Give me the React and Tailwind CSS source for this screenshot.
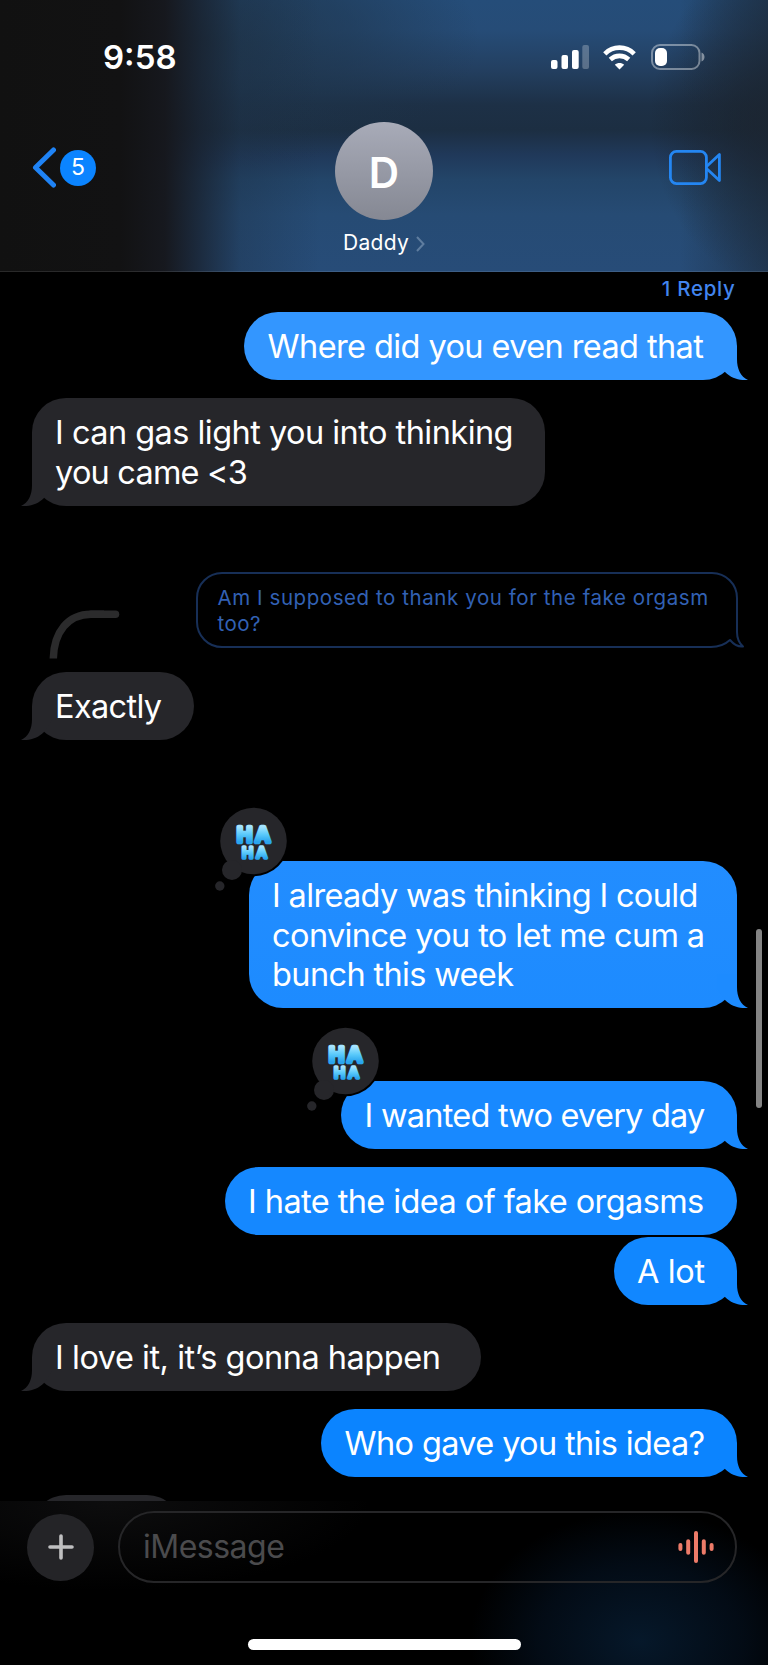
const messages = [
  {
    id: 1,
    side: 'right',
    tail: true,
    box: 'mt-[11px] h-[68px] w-[492.5px] bg-[#3396ff]',
    tailColor: 'text-[#3396ff]',
    lines: [{ text: 'Where did you even read that', tracking: 'tracking-[-0.6px]' }]
  },
  {
    id: 2,
    side: 'left',
    tail: true,
    box: 'mt-[18px] h-[107.5px] w-[513.5px] bg-[#26262a]',
    tailColor: 'text-[#26262a]',
    lines: [
      { text: 'I can gas light you into thinking', tracking: 'tracking-[-0.54px]' },
      { text: 'you came <3', tracking: 'tracking-[-0.8px]' }
    ]
  },
  { id: 3, quoted: true },
  {
    id: 4,
    side: 'left',
    tail: true,
    box: 'mt-[24px] h-[68px] w-[162.5px] bg-[#26262a]',
    tailColor: 'text-[#26262a]',
    lines: [{ text: 'Exactly', tracking: 'tracking-[-0.67px]' }]
  },
  {
    id: 5,
    side: 'right',
    tail: true,
    haha: true,
    box: 'mt-[121px] h-[146.5px] w-[488px] bg-gradient-to-b from-[#228dff] to-[#1d8bff]',
    tailColor: 'text-[#1d8bff]',
    lines: [
      { text: 'I already was thinking I could', tracking: 'tracking-[-0.67px]' },
      { text: 'convince you to let me cum a', tracking: 'tracking-[-0.63px]' },
      { text: 'bunch this week', tracking: 'tracking-[-0.65px]' }
    ]
  },
  {
    id: 6,
    side: 'right',
    tail: true,
    haha: true,
    box: 'mt-[73.5px] h-[68px] w-[395.5px] bg-[#1889ff]',
    tailColor: 'text-[#1889ff]',
    lines: [{ text: 'I wanted two every day', tracking: 'tracking-[-0.77px]' }]
  },
  {
    id: 7,
    side: 'right',
    box: 'mt-[18px] h-[68px] w-[512px] bg-[#1588ff]',
    lines: [{ text: 'I hate the idea of fake orgasms', tracking: 'tracking-[-0.59px]' }]
  },
  {
    id: 8,
    side: 'right',
    tail: true,
    box: 'mt-[2px] h-[68px] w-[123px] bg-[#1187ff]',
    tailColor: 'text-[#1187ff]',
    lines: [{ text: 'A lot', tracking: 'tracking-[-0.4px]' }]
  },
  {
    id: 9,
    side: 'left',
    tail: true,
    box: 'mt-[18px] h-[68px] w-[449.5px] bg-[#26262a]',
    tailColor: 'text-[#26262a]',
    lines: [{ text: 'I love it, it’s gonna happen', tracking: 'tracking-[-0.48px]' }]
  },
  {
    id: 10,
    side: 'right',
    tail: true,
    box: 'mt-[18px] h-[68px] w-[415.5px] bg-[#0b84ff]',
    tailColor: 'text-[#0b84ff]',
    lines: [{ text: 'Who gave you this idea?', tracking: 'tracking-[-0.64px]' }]
  }
];

const SignalIcon = () => (
  <svg className="w-[38px] h-[24px]" viewBox="0 0 38 24" fill="#fff">
    <rect x="0" y="15" width="6.5" height="9" rx="2" />
    <rect x="10.5" y="10" width="6.5" height="14" rx="2" />
    <rect x="21" y="5" width="6.7" height="19" rx="2" />
    <rect x="31.3" y="0" width="6.7" height="24" rx="2" opacity="0.25" />
  </svg>
);

const WifiIcon = () => (
  <svg className="w-[33px] h-[25px]" viewBox="0 0 33 25" fill="none" stroke="#fff" strokeWidth="4.6">
    <path d="M1.8 8.8C10 .6 23 .6 31.2 8.8" />
    <path d="M7.3 14.5c5.2-4.9 13.2-4.9 18.4 0" />
    <path d="M16.5 24.6l-4.7-4.9c2.6-2.4 6.8-2.4 9.4 0z" fill="#fff" stroke="none" />
  </svg>
);

const BatteryIcon = () => (
  <svg className="w-[54px] h-[26px]" viewBox="0 0 54 26" fill="none">
    <rect x="1" y="1" width="47.5" height="24" rx="8" stroke="#fff" strokeOpacity="0.4" strokeWidth="2" />
    <rect x="4" y="4" width="12" height="18" rx="5" fill="#fff" />
    <path d="M50.5 8.5c4 1.6 4 7.4 0 9z" fill="#fff" fillOpacity="0.45" />
  </svg>
);

const Tail = ({ side, color }) => (
  <svg
    className={`absolute bottom-0 w-[31px] h-[34px] ${color} ${side === 'right' ? '-right-[11px]' : '-left-[11px] -scale-x-100'}`}
    viewBox="0 0 31 34"
    fill="currentColor"
  >
    <path d="M0 0H20V13C20 23 23.5 30.5 31 34C22.5 34.6 14.5 32.5 8 26L0 14Z" />
  </svg>
);

const HahaReaction = () => (
  <svg className="absolute -left-[34px] -top-[56px] w-[76px] h-[86px]" viewBox="0 0 76 86">
    <defs>
      <linearGradient id="haha" x1="0" y1="0" x2="0" y2="1">
        <stop offset="0.2" stopColor="#a5e4ff" />
        <stop offset="0.5" stopColor="#5ccbfb" />
        <stop offset="0.8" stopColor="#2aa5ee" />
      </linearGradient>
    </defs>
    <circle cx="38.5" cy="36" r="35.3" fill="#000" />
    <circle cx="38.5" cy="36" r="33.3" fill="#26262a" />
    <circle cx="17" cy="65" r="10" fill="#26262a" />
    <circle cx="4.8" cy="81" r="4.7" fill="#26262a" />
    <g
      fill="url(#haha)"
      stroke="url(#haha)"
      strokeLinejoin="round"
      fontFamily="Inter, sans-serif"
      fontWeight="500"
      textAnchor="middle"
    >
      <text x="38.5" y="36.7" fontSize="20.5" strokeWidth="4.6" textLength="33" lengthAdjust="spacing">HA</text>
      <text x="39.5" y="53" fontSize="15" strokeWidth="3.4" textLength="25" lengthAdjust="spacing">HA</text>
    </g>
  </svg>
);

const Bubble = ({ message }) => (
  <div className={`flex ${message.side === 'right' ? 'justify-end' : 'justify-start'}`}>
    <div className={`relative shrink-0 rounded-[34px] pl-[23.6px] pt-[15.4px] ${message.box}`}>
      {message.tail && <Tail side={message.side} color={message.tailColor} />}
      {message.haha && <HahaReaction />}
      {message.lines.map((line) => (
        <p key={line.text} className="relative whitespace-nowrap text-[32.5px] leading-[39.3px]">
          <span className={line.tracking}>{line.text}</span>
        </p>
      ))}
    </div>
  </div>
);

const QuotedReply = () => (
  <div className="mt-[66.5px] flex justify-between items-end">
    <svg className="ml-[17px] -mb-[11px] w-[71px] h-[49px]" viewBox="0 0 71 49" fill="none" stroke="#2b2b2c" strokeWidth="7.5">
      <path d="M4.3 48.5C5 22 19 4.3 42 4.3H55" />
      <path d="M42 4.3H66.5" strokeLinecap="round" />
    </svg>
    <div className="relative h-[76px] w-[542px] rounded-[26px] border-2 border-[#172f57] pl-[20px] pt-[11px] -mr-[1px]">
      <p className="whitespace-nowrap text-[20.5px] leading-[25.5px] text-[#3261b4]">
        <span className="tracking-[0.57px]">Am I supposed to thank you for the fake orgasm</span>
        <br />
        <span className="tracking-[0.5px]">too?</span>
      </p>
      <svg className="absolute -right-[9px] -bottom-[2px] w-[34px] h-[28px]" viewBox="0 0 34 28" fill="none">
        <path d="M0 0H34V28H0Z" fill="#000" />
        <path
          d="M0 27C8 27 14 24.5 19 20C22 23.5 27 27 32 26.5C28 23 26 18 26 12V0"
          stroke="#172f57"
          strokeWidth="2"
          strokeLinejoin="round"
        />
      </svg>
    </div>
  </div>
);

const Header = () => (
  <header className="relative h-[272px] shrink-0 overflow-hidden bg-[linear-gradient(180deg,#254d79_0px,#264c77_30px,#233f60_70px,#1d3046_105px,#1c2e42_130px,#20395a_155px,#234569_180px,#264b74_215px,#274c78_272px)]">
    {/* Colour that shows through the frosted bar */}
    <div className="absolute inset-0 bg-[radial-gradient(ellipse_280px_130px_at_200px_40px,rgba(30,50,68,0.8),rgba(30,52,74,0.5)_55%,transparent)]" />
    <div className="absolute inset-0 bg-[radial-gradient(ellipse_140px_170px_at_790px_120px,rgba(26,28,33,1),rgba(26,32,40,0.5)_50%,transparent)]" />
    <div className="absolute inset-0 bg-[linear-gradient(90deg,#111111_0px,#121213_120px,rgba(22,23,28,0.97)_165px,rgba(24,32,44,0.75)_200px,rgba(28,46,66,0.35)_240px,transparent_320px,transparent_680px,rgba(28,42,58,0.6)_768px)]" />

    <div className="relative flex items-center justify-between pl-[103px] pr-[63px] pt-[37px]">
      <span className="text-[33px] font-semibold leading-[40px]">9:58</span>
      <div className="flex items-center">
        <SignalIcon />
        <div className="ml-[14px]"><WifiIcon /></div>
        <div className="ml-[15px]"><BatteryIcon /></div>
      </div>
    </div>

    <div className="relative mt-[45px] flex justify-between px-[32px]">
      <div className="flex flex-1 items-center self-start pt-[25px]">
        <svg className="w-[24px] h-[41px]" viewBox="0 0 24 41" fill="none" stroke="#1f83f5" strokeWidth="5" strokeLinecap="round" strokeLinejoin="round">
          <path d="M21.5 3L3.5 20.5L21.5 38" />
        </svg>
        <span className="ml-[4px] flex h-9 w-9 items-center justify-center rounded-full bg-[#0b84ff] text-[23px]">5</span>
      </div>
      <div className="flex flex-col items-center">
        <div className="flex h-[98px] w-[98px] items-center justify-center rounded-full bg-gradient-to-b from-[#a8abb8] to-[#858893] pt-[2px] text-[42px] font-semibold">
          D
        </div>
        <div className="mt-[10px] flex items-center gap-[7px]">
          <span className="text-[21px] leading-[25px] tracking-[0.3px]">Daddy</span>
          <svg className="mt-[3px] w-[9px] h-[16px]" viewBox="0 0 9 16" fill="none" stroke="#5f7d9f" strokeWidth="2">
            <path d="M1 1L7.5 8L1 15" />
          </svg>
        </div>
      </div>
      <div className="flex flex-1 justify-end pt-[28px]">
        <svg className="mr-[15px] w-[52px] h-[35px]" viewBox="0 0 52 35" fill="none" stroke="#2486f2" strokeWidth="2.8" strokeLinejoin="round">
          <rect x="1.4" y="1.4" width="36" height="32.2" rx="6" />
          <path d="M37.5 16.5L50.4 4.5V30.5L37.5 18.5" />
        </svg>
      </div>
    </div>
    <div className="absolute inset-x-0 bottom-0 h-px bg-white/10" />
  </header>
);

const InputBar = () => (
  <footer className="relative h-[164px] shrink-0 overflow-hidden bg-black bg-[radial-gradient(ellipse_170px_130px_at_640px_140px,#06182a,rgba(4,16,30,0.7)_60%,transparent),radial-gradient(ellipse_260px_90px_at_110px_0px,#0d0d0e,transparent)]">
    <div className="flex items-center pl-[27px] pr-[31.5px] pt-[10px]">
      <div className="flex h-[67px] w-[67px] items-center justify-center rounded-full bg-[#242427]">
        <svg className="w-[26px] h-[26px]" viewBox="0 0 26 26" stroke="#c0c0c1" strokeWidth="3.6" strokeLinecap="round">
          <path d="M13 2V24M2 13H24" />
        </svg>
      </div>
      <div className="ml-[24px] flex h-[72px] flex-1 items-center justify-between rounded-full border-2 border-[#262628] pl-[23px] pr-[21px]">
        <span className="text-[32px] leading-[40px] tracking-[-0.5px] text-[#4b4b4d]">iMessage</span>
        <svg className="w-[36px] h-[34px]" viewBox="0 0 36 34" stroke="#ed7b69" strokeWidth="4" strokeLinecap="round">
          <path d="M2.4 15V19M10.2 11.2V22.8M18 3V31M25.8 11.2V22.8M33.6 15V19" />
        </svg>
      </div>
    </div>
    <div className="mx-auto mt-[56px] h-[10.5px] w-[273px] rounded-full bg-white" />
  </footer>
);

const App = () => {
  return (
    <div className="relative flex h-[1665px] w-[768px] flex-col overflow-hidden bg-black font-['Inter',sans-serif] text-white">
      <Header />

      <main className="h-[1229px] shrink-0 overflow-hidden pl-[31.5px] pr-[31.5px] pt-[4px]">
        <p className="pr-[1px] text-right text-[20.5px] font-medium leading-[25px] text-[#4285ee]">
          <span className="tracking-[0.7px]">1 Reply</span>
        </p>
        {messages.map((message) =>
          message.quoted ? <QuotedReply key={message.id} /> : <Bubble key={message.id} message={message} />
        )}
        {/* Next message, cut off by the input bar */}
        <div className="mt-[18px] h-[68px] w-[149px] rounded-[34px] bg-[#26262a]" />
      </main>

      <InputBar />

      {/* Scroll indicator */}
      <div className="absolute left-[756px] top-[929px] h-[179px] w-[6px] rounded-full bg-[#848484]" />
    </div>
  );
};

export default App;
